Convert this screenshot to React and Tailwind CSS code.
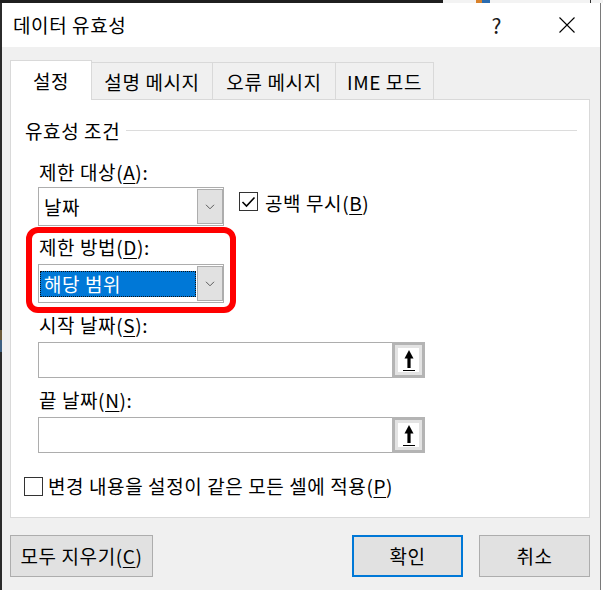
import React from "react";

const Chevron = () => (
  <svg width="10" height="6" viewBox="0 0 10 6">
    <path d="M1 0.8 L5 4.8 L9 0.8" fill="none" stroke="#5a5a5a" strokeWidth="1" />
  </svg>
);

const PickIcon = () => (
  <svg width="12" height="21" viewBox="0 0 12 21">
    <path d="M6 0 L10.5 8.5 L1.5 8.5 Z" fill="#000" />
    <rect x="4.4" y="7.5" width="3.2" height="10.5" fill="#000" />
    <rect x="0" y="20" width="12" height="1" fill="#000" />
  </svg>
);

const CheckBox = ({ checked }) => (
  <div className="w-[19px] h-[19px] border border-[#333333] bg-white flex items-center justify-center shrink-0">
    {checked && (
      <svg width="15" height="12" viewBox="0 0 15 12">
        <path d="M1.5 6 L5.5 10 L13.5 1.5" fill="none" stroke="#000" strokeWidth="1.6" />
      </svg>
    )}
  </div>
);

const U = ({ children }) => <span className="underline underline-offset-[3px] decoration-1">{children}</span>;

const Label = ({ className = "", children }) => (
  <div className={"h-[24px] leading-[24px] ml-[28px] whitespace-nowrap " + className}>{children}</div>
);

const RefInput = ({ className = "" }) => (
  <div className={"w-[387px] h-[36px] ml-[27px] flex bg-white " + className}>
    <div className="flex-1 border border-r-0 border-[#adadad]" />
    <div className="w-[33px] h-full border-[3px] border-[#b4b4b4] bg-[#e3e3e3] p-[3px]">
      <div className="w-full h-full bg-white flex items-center justify-center">
        <PickIcon />
      </div>
    </div>
  </div>
);

export default function App() {
  return (
    <div className="w-[603px] h-[590px] overflow-hidden flex flex-col bg-[#f0f0f0] text-black text-[19px] tracking-[0.6px] font-['Noto_Sans_CJK_KR','Noto_Sans',sans-serif]">
      {/* top strip of the window behind */}
      <div className="h-[3px] flex shrink-0">
        <div className="w-[443px] bg-[#1f1f1f]" />
        <div className="w-[33px] bg-[#f3f3f3]" />
        <div className="w-[6px] bg-[#d9822b]" />
        <div className="w-[8px] bg-[#2b6cb0]" />
        <div className="w-[100px] bg-[#f3f3f3]" />
        <div className="w-[1px] bg-[#333333]" />
        <div className="flex-1 bg-[#f3f3f3]" />
      </div>
      <div className="flex-1 flex">
        {/* left edge of window behind */}
        <div className="w-[2px] flex flex-col">
          <div className="h-[327px] bg-[#2b2b2b]" />
          <div className="h-[10px] bg-[#6b5a3a]" />
          <div className="h-[12px] bg-[#3d5f80]" />
          <div className="flex-1 bg-[#2b2b2b]" />
        </div>
        {/* dialog */}
        <div className="w-[598px] flex flex-col">
          {/* title bar */}
          <div className="h-[44px] bg-white flex items-center shrink-0">
            <div className="pl-[11px] leading-[24px] whitespace-nowrap">데이터 유효성</div>
            <div className="flex-1" />
            <div className="w-[73px] text-center text-[21px] leading-[24px] tracking-normal text-[#1a1a1a]">?</div>
            <div className="w-[67px] flex justify-center">
              <svg width="16" height="16" viewBox="0 0 16 16">
                <path d="M0.5 0.5 L15.5 15.5 M15.5 0.5 L0.5 15.5" stroke="#000" strokeWidth="1.1" />
              </svg>
            </div>
          </div>
          {/* body */}
          <div className="flex-1 flex flex-col pl-[8px] pr-[10px] pt-[13px]">
            {/* tabs */}
            <div className="h-[40px] -mb-[1px] flex items-end relative z-10">
              <div className="w-[82px] h-[40px] bg-white border border-b-0 border-[#d9d9d9] flex items-center justify-center leading-[24px] pt-[1px]">
                설정
              </div>
              <div className="w-[121px] h-[37px] mb-[1px] border-t border-r border-[#d9d9d9] flex items-center justify-center leading-[24px] whitespace-nowrap pt-[1px]">
                설명 메시지
              </div>
              <div className="w-[123px] h-[37px] mb-[1px] border-t border-r border-[#d9d9d9] flex items-center justify-center leading-[24px] whitespace-nowrap pt-[1px]">
                오류 메시지
              </div>
              <div className="w-[98px] h-[37px] mb-[1px] border-t border-r border-[#d9d9d9] flex items-center justify-center leading-[24px] whitespace-nowrap pt-[1px]">
                IME 모드
              </div>
            </div>
            {/* panel */}
            <div className="h-[419px] w-[580px] bg-white border border-[#d9d9d9] relative flex flex-col">
              <div className="mt-[19px] h-[24px] flex items-center">
                <span className="ml-[14px] leading-[24px] whitespace-nowrap">유효성 조건</span>
                <div className="flex-1 h-px bg-[#dcdcdc] ml-[6px] mr-[12px] -mt-[1px]" />
              </div>

              <Label className="mt-[17px]">
                제한 대상(<U>A</U>):
              </Label>
              <div className="mt-[3px] ml-[27px] flex items-start">
                <div className="w-[186px] h-[39px] border border-[#adadad] bg-white flex items-center">
                  <div className="flex-1 pl-[5px] leading-[24px]">날짜</div>
                  <div className="w-[26px] h-[35px] bg-[#e1e1e1] border border-[#adadad] flex items-center justify-center">
                    <Chevron />
                  </div>
                </div>
                <div className="ml-[15px] mt-[4px] flex items-start">
                  <div className="mt-[1px]">
                    <CheckBox checked />
                  </div>
                  <div className="ml-[7px] leading-[24px] whitespace-nowrap">
                    공백 무시(<U>B</U>)
                  </div>
                </div>
              </div>

              <Label className="mt-[9px]">
                제한 방법(<U>D</U>):
              </Label>
              <div className="mt-[5px] ml-[27px] w-[186px] h-[39px] border border-[#adadad] bg-white flex items-center">
                <div className="ml-[1px] w-[156px] h-[26px] bg-[#0078d7] border border-dotted border-[#111111] flex items-center pl-[3px] text-white leading-[24px] whitespace-nowrap">
                  해당 범위
                </div>
                <div className="flex-1" />
                <div className="w-[26px] h-[35px] bg-[#e1e1e1] border border-[#adadad] flex items-center justify-center">
                  <Chevron />
                </div>
              </div>

              <Label className="mt-[10px]">
                시작 날짜(<U>S</U>):
              </Label>
              <RefInput className="mt-[5px]" />

              <Label className="mt-[10px]">
                끝 날짜(<U>N</U>):
              </Label>
              <RefInput className="mt-[5px]" />

              <div className="mt-[21px] h-[24px] ml-[13px] flex items-center">
                <CheckBox />
                <div className="ml-[5px] leading-[24px] whitespace-nowrap">
                  변경 내용을 설정이 같은 모든 셀에 적용(<U>P</U>)
                </div>
              </div>

              {/* red annotation box */}
              <div className="absolute left-[15px] top-[127px] w-[210px] h-[86px] border-[6px] border-[#ff0000] rounded-[12px] pointer-events-none" />
            </div>
            {/* footer buttons */}
            <div className="mt-[17px] flex">
              <div className="w-[143px] h-[42px] bg-[#e1e1e1] border border-[#adadad] flex items-center justify-center leading-[24px] whitespace-nowrap">
                모두 지우기(<U>C</U>)
              </div>
              <div className="flex-1" />
              <div className="w-[111px] h-[42px] bg-[#e1e1e1] border-2 border-[#0078d7] flex items-center justify-center leading-[24px]">
                확인
              </div>
              <div className="ml-[16px] w-[111px] h-[42px] bg-[#e1e1e1] border border-[#adadad] flex items-center justify-center leading-[24px]">
                취소
              </div>
            </div>
          </div>
        </div>
        <div className="w-[1px] bg-[#7a7a7a]" />
        <div className="w-[2px] bg-white" />
      </div>
    </div>
  );
}
